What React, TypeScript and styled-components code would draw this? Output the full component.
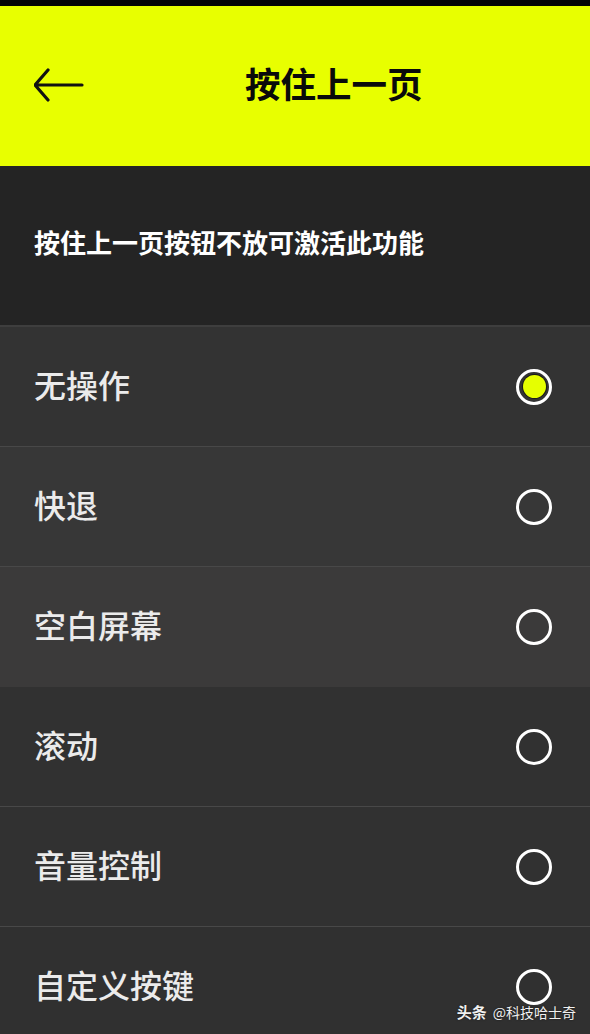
import React from "react";
import styled, { createGlobalStyle } from "styled-components";

const Global = createGlobalStyle`
  html, body { margin: 0; padding: 0; background: #2f2f2f; }
  body { font-family: "Noto Sans CJK SC", "Noto Sans", sans-serif; }
`;

const Page = styled.div`
  width: 590px;
  height: 1034px;
  overflow: hidden;
  display: flex;
  flex-direction: column;
  background: #2f2f2f;
  position: relative;
  & > * { flex-shrink: 0; }
`;

const StatusStrip = styled.div`
  height: 6px;
  background: #050505;
`;

const Header = styled.header`
  height: 160px;
  background: #e8ff00;
  display: flex;
  align-items: center;
  padding: 0 0 0 34px;
  box-sizing: border-box;
`;

const BackButton = styled.div`
  width: 50px;
  height: 36px;
  display: flex;
  align-items: center;
  margin-top: -2px;
`;

const Title = styled.h1`
  margin: -6px 0 0 161px;
  font-size: 35.5px;
  font-weight: 700;
  color: #0a0a0a;
  line-height: 1;
`;

const Intro = styled.div`
  height: 161px;
  background: #242424;
  display: flex;
  align-items: center;
  padding-left: 34px;
  box-sizing: border-box;
  color: #ffffff;
  font-size: 26px;
  font-weight: 700;
  border-bottom: 2px solid #3e3e3e;
`;

const IntroText = styled.span`
  margin-top: -8px;
`;

const Row = styled.div<{ $bg: string; $line: boolean }>`
  height: 120px;
  box-sizing: border-box;
  background: ${(p) => p.$bg};
  border-bottom: ${(p) => (p.$line ? "1px solid #484848" : "none")};
  display: flex;
  align-items: center;
  justify-content: space-between;
  padding: 0 38px 0 34px;
`;

const Label = styled.span`
  color: #ebebeb;
  font-size: 32px;
  font-weight: 500;
  margin-top: -6px;
`;

const Radio = styled.div<{ $on: boolean }>`
  width: 36px;
  height: 36px;
  border-radius: 50%;
  border: 3.5px solid #ffffff;
  box-sizing: border-box;
  display: flex;
  align-items: center;
  justify-content: center;
  &::after {
    content: "";
    display: ${(p) => (p.$on ? "block" : "none")};
    width: 23px;
    height: 23px;
    border-radius: 50%;
    background: #e6ff00;
    box-shadow: 0 0 0 1px #1a1a1a;
  }
`;

const Watermark = styled.div`
  position: absolute;
  right: 14px;
  bottom: 12px;
  color: #f0f0f0;
  font-size: 14px;
  display: flex;
  gap: 6px;
  align-items: baseline;
  text-shadow: 0 0 2px rgba(0,0,0,0.6);
`;

const WmBrand = styled.span`
  font-weight: 700;
  font-size: 15px;
`;

const options = [
  { label: "无操作", bg: "#333333", line: true, on: true },
  { label: "快退", bg: "#373737", line: true, on: false },
  { label: "空白屏幕", bg: "#3b3a3a", line: false, on: false },
  { label: "滚动", bg: "#313131", line: true, on: false },
  { label: "音量控制", bg: "#313131", line: true, on: false },
  { label: "自定义按键", bg: "#303030", line: false, on: false },
];

export default function App() {
  return (
    <Page>
      <Global />
      <StatusStrip />
      <Header>
        <BackButton>
          <svg width="50" height="36" viewBox="0 0 50 36" fill="none">
            <path d="M48 18H2M14 3L1 18L14 33" stroke="#111" strokeWidth="3.2" strokeLinecap="round" strokeLinejoin="round" />
          </svg>
        </BackButton>
        <Title>按住上一页</Title>
      </Header>
      <Intro>
        <IntroText>按住上一页按钮不放可激活此功能</IntroText>
      </Intro>
      {options.map((o) => (
        <Row key={o.label} $bg={o.bg} $line={o.line}>
          <Label>{o.label}</Label>
          <Radio $on={o.on} />
        </Row>
      ))}
      <Watermark>
        <WmBrand>头条</WmBrand>
        <span>@科技哈士奇</span>
      </Watermark>
    </Page>
  );
}
